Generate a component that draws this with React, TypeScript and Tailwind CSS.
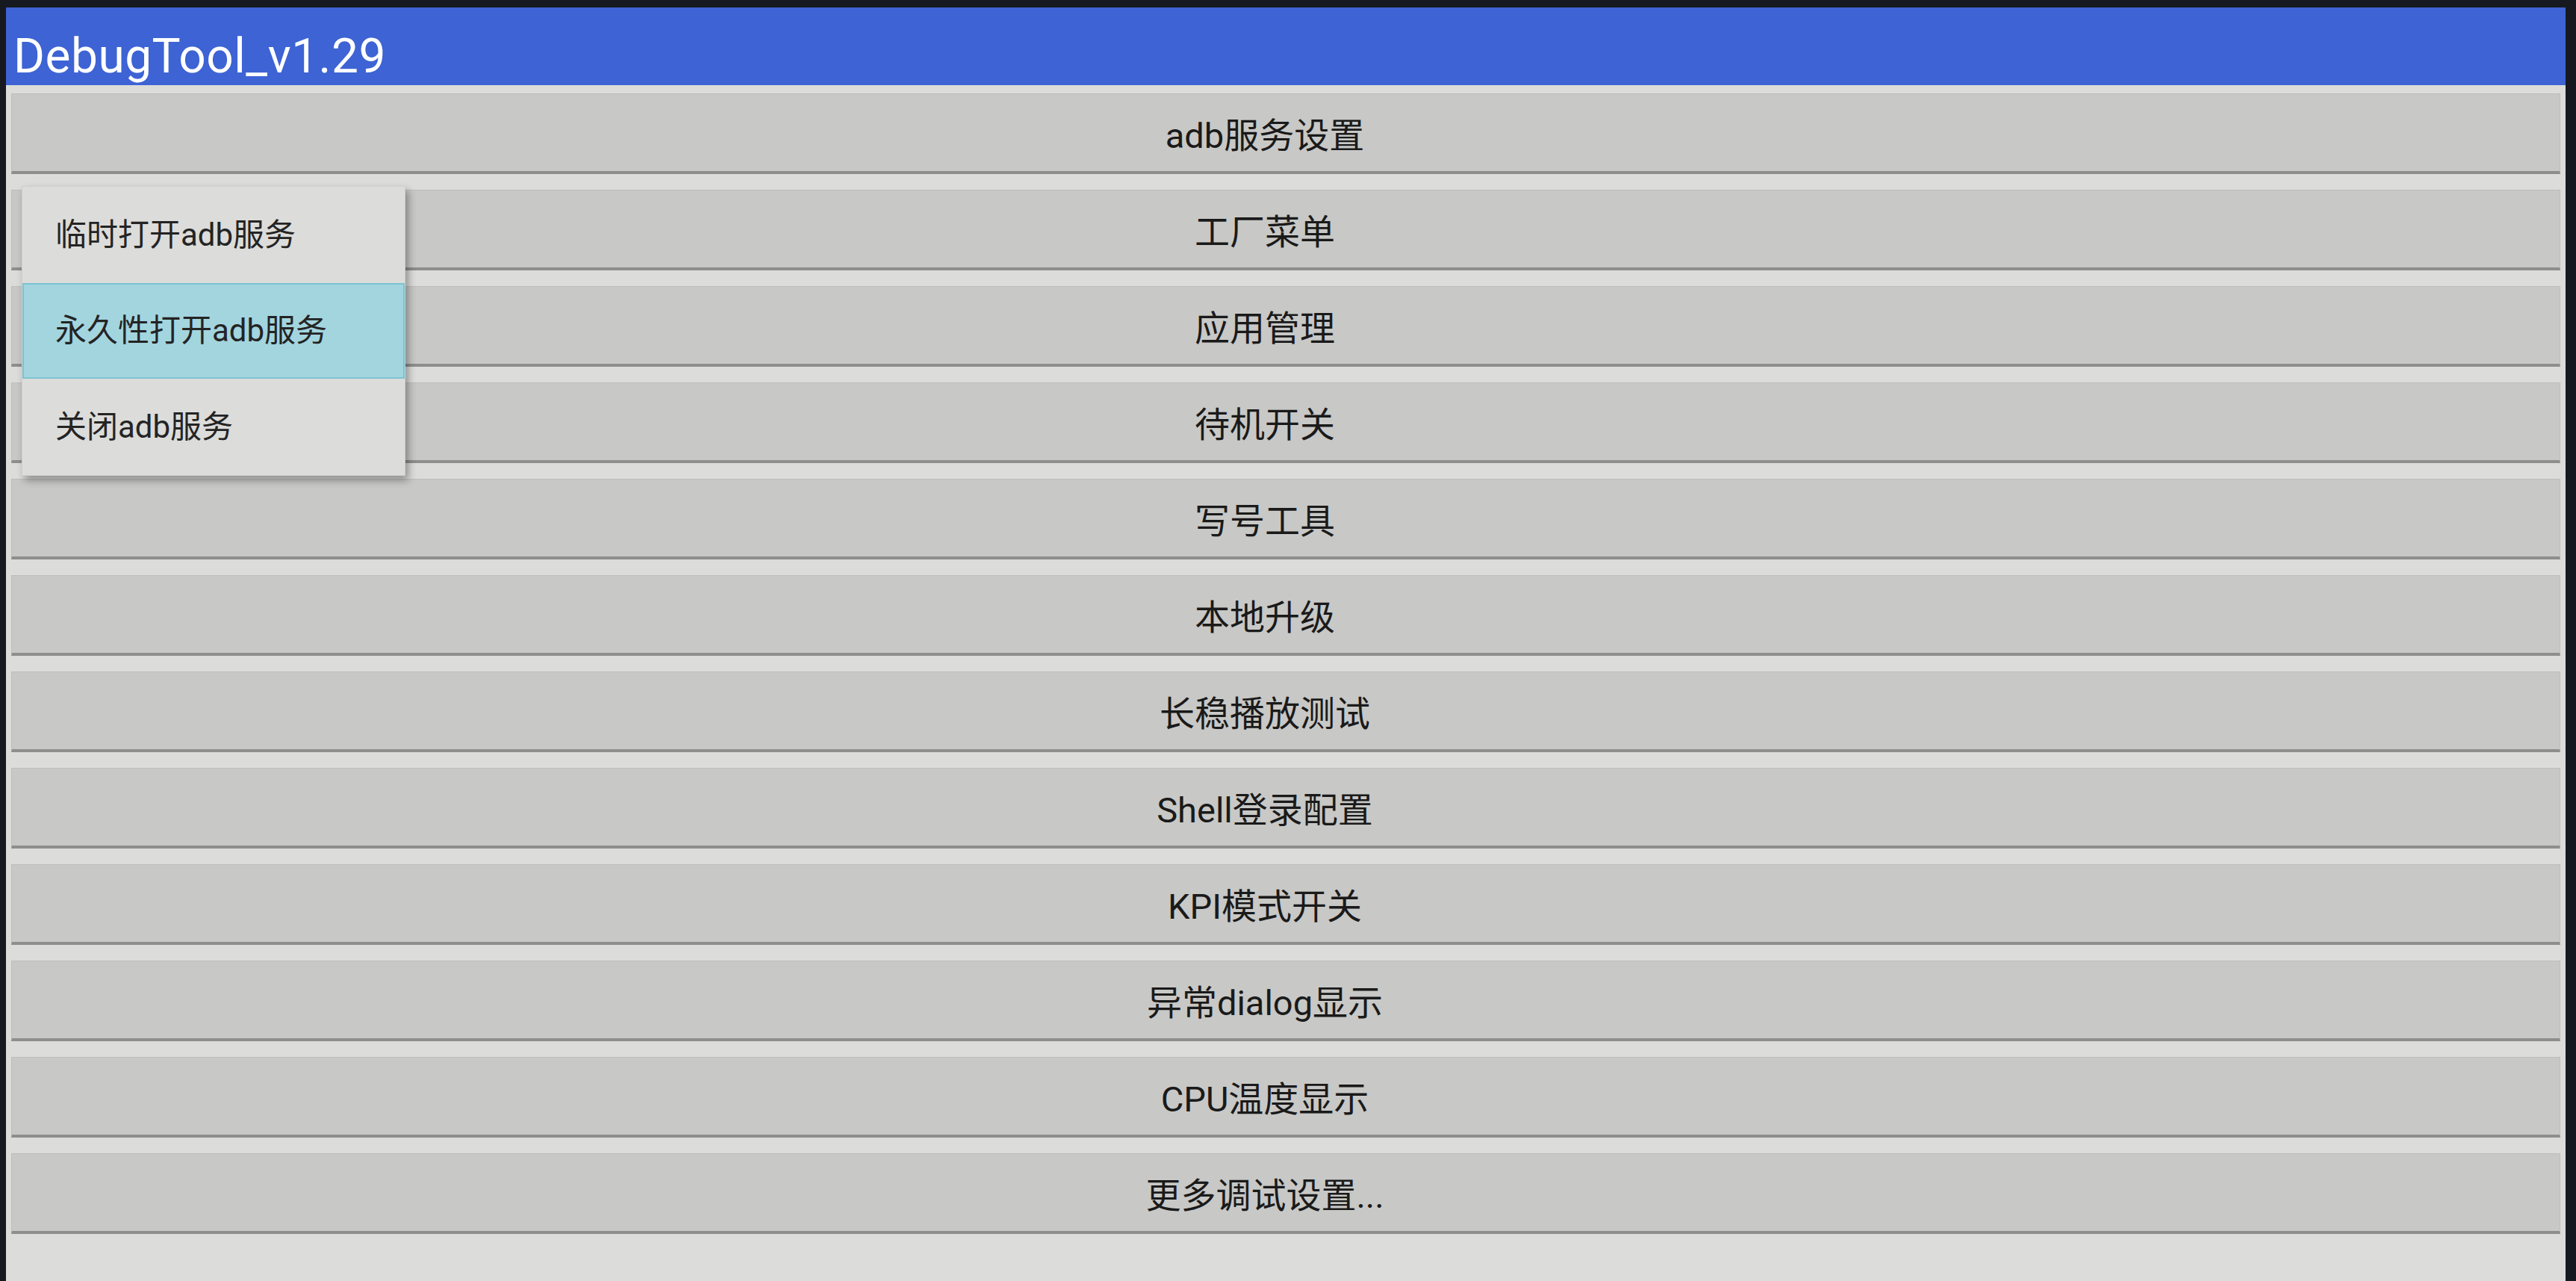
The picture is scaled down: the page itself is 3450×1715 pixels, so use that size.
import React from "react";

// Entradas del menú principal
const ITEMS = [
  "adb服务设置",
  "工厂菜单",
  "应用管理",
  "待机开关",
  "写号工具",
  "本地升级",
  "长稳播放测试",
  "Shell登录配置",
  "KPI模式开关",
  "异常dialog显示",
  "CPU温度显示",
  "更多调试设置...",
];

const POPUP = ["临时打开adb服务", "永久性打开adb服务", "关闭adb服务"];

const FONT = { fontFamily: 'Roboto, "Noto Sans CJK SC", sans-serif' };

export default function App() {
  return (
    <div
      className="w-[3450px] h-[1715px] bg-[#161a20] pt-[10px] pl-[8px] pr-[14px] flex flex-col overflow-hidden"
      style={FONT}
    >
      <div className="relative flex-1 bg-[#dcdcda] flex flex-col">
        {/* barra de título */}
        <div className="h-[104px] bg-[#3d63d4] flex items-end pl-[10px] pb-[6px]">
          <span className="text-[64px] leading-none text-white tracking-[0.5px]">DebugTool_v1.29</span>
        </div>

        {/* lista de botones */}
        <div className="flex flex-col gap-[21px] px-[7px] pt-[11px]">
          {ITEMS.map((label) => (
            <div
              key={label}
              className="h-[108px] bg-[#c8c8c6] border-x border-t border-[#bdbdbb] border-b-[4px] border-b-[#8e8e8c] flex items-center justify-center pr-[56px] pt-[8px]"
            >
              <span className="text-[47px] leading-none text-[#1a1a1a]">{label}</span>
            </div>
          ))}
        </div>

        {/* menú emergente */}
        <div className="absolute left-[21px] top-[239px] w-[514px] bg-[#dcdcda] border border-[#cfcfcd] shadow-[4px_6px_10px_rgba(0,0,0,0.35)] flex flex-col">
          {POPUP.map((label, i) => (
            <div
              key={label}
              className={
                i === 1
                  ? "h-[128px] flex items-center pl-[42px] bg-[#a3d5df] border-2 border-[#7cc3d2]"
                  : "h-[129px] flex items-center pl-[44px]"
              }
            >
              <span className="text-[42px] leading-none text-[#242424]">{label}</span>
            </div>
          ))}
        </div>
      </div>
    </div>
  );
}
